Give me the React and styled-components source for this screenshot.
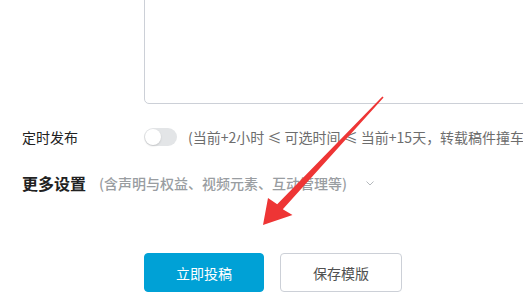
import React from 'react';
import styled, { createGlobalStyle } from 'styled-components';

const GlobalStyle = createGlobalStyle`
  html, body {
    margin: 0;
    padding: 0;
    background: #fff;
    overflow: hidden;
  }
  body {
    font-family: "Noto Sans CJK SC", "Noto Sans", sans-serif;
    color: #333;
  }
`;

const Page = styled.div`
  position: relative;
  width: 523px;
  height: 295px;
  overflow: hidden;
`;

const Form = styled.div`
  display: flex;
  flex-direction: column;
  padding-left: 22px;
`;

const TextBox = styled.div`
  margin-top: -40px;
  margin-left: 122px;
  width: 460px;
  height: 144px;
  border: 1px solid #ccd0d7;
  border-radius: 5px;
  box-sizing: border-box;
  flex-shrink: 0;
`;

const Row = styled.div`
  display: flex;
  align-items: center;
  height: 30px;
  margin-top: ${(p) => p.$top}px;
  white-space: nowrap;
`;

const Label = styled.div`
  width: 122px;
  font-size: 14px;
  color: #212121;
  flex-shrink: 0;
`;

const Toggle = styled.div`
  position: relative;
  width: 33px;
  height: 18px;
  border-radius: 9px;
  background: #e3e5e7;
  flex-shrink: 0;
`;

const Knob = styled.div`
  position: absolute;
  left: 1px;
  top: 1px;
  width: 16px;
  height: 16px;
  border-radius: 50%;
  background: #fff;
  box-shadow: 0 1px 2px rgba(0, 0, 0, 0.15);
`;

const Hint = styled.div`
  margin-left: 11px;
  font-size: 14px;
  color: #6d6d6d;
`;

const SectionTitle = styled.div`
  font-size: 16px;
  font-weight: 700;
  color: #212121;
`;

const SectionHint = styled.div`
  margin-left: 13px;
  font-size: 14px;
  font-weight: 500;
  color: #999da1;
`;

const Chevron = styled.svg`
  margin-left: 18px;
  width: 10px;
  height: 10px;
`;

const Buttons = styled.div`
  display: flex;
  gap: 16px;
  margin-top: 55px;
  margin-left: 122px;
`;

const Button = styled.button`
  width: ${(p) => (p.$primary ? 120 : 122)}px;
  height: 39px;
  border-radius: 4px;
  border: 1px solid ${(p) => (p.$primary ? '#00a1d6' : '#ccd0d7')};
  background: ${(p) => (p.$primary ? '#00a1d6' : '#fff')};
  color: ${(p) => (p.$primary ? '#fff' : '#505050')};
  font-family: "Noto Sans CJK SC", sans-serif;
  font-size: 14px;
  cursor: pointer;
`;

const Arrow = styled.svg`
  position: absolute;
  left: 0;
  top: 0;
  pointer-events: none;
`;

const App = () => {
  return (
    <Page>
      <GlobalStyle />
      <Form>
        <TextBox />
        <Row $top={18}>
          <Label>定时发布</Label>
          <Toggle>
            <Knob />
          </Toggle>
          <Hint>(当前+2小时 ≤ 可选时间 ≤ 当前+15天，转载稿件撞车</Hint>
        </Row>
        <Row $top={16}>
          <SectionTitle>更多设置</SectionTitle>
          <SectionHint>(含声明与权益、视频元素、互动管理等)</SectionHint>
          <Chevron viewBox="0 0 10 10">
            <path d="M1.5 3.5 L5 7 L8.5 3.5" fill="none" stroke="#b5b9bd" strokeWidth="1" />
          </Chevron>
        </Row>
        <Buttons>
          <Button $primary>立即投稿</Button>
          <Button>保存模版</Button>
        </Buttons>
      </Form>
      {/* red annotation arrow */}
      <Arrow width="523" height="295" viewBox="0 0 523 295">
        <polygon
          points="263,225 268,198 277.2,204.2 382.4,96.6 383.6,97.6 282.8,209.2 292.5,215"
          fill="#ee3535"
        />
      </Arrow>
    </Page>
  );
};

export default App;
